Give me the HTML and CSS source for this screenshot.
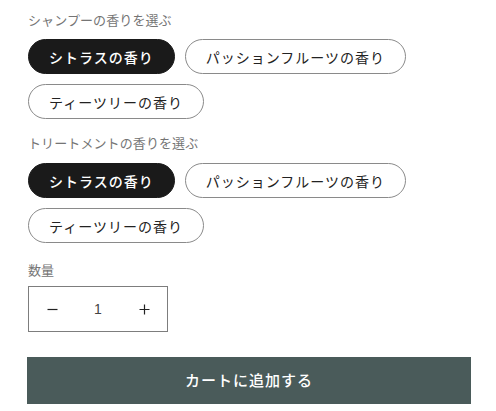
FILE: index.html
```html
<!DOCTYPE html>
<html lang="ja">
<head>
<meta charset="utf-8">
<link rel="stylesheet" href="styles.css">
</head>
<body>
<div class="product-form">
  <div class="option">
    <div class="option-label">シャンプーの香りを選ぶ</div>
    <div class="pills">
      <span class="pill pill-active">シトラスの香り</span>
      <span class="pill">パッションフルーツの香り</span>
      <span class="pill">ティーツリーの香り</span>
    </div>
  </div>
  <div class="option option-second">
    <div class="option-label">トリートメントの香りを選ぶ</div>
    <div class="pills">
      <span class="pill pill-active">シトラスの香り</span>
      <span class="pill">パッションフルーツの香り</span>
      <span class="pill">ティーツリーの香り</span>
    </div>
  </div>
  <div class="qty-label">数量</div>
  <div class="qty">
    <span class="qty-btn">
      <svg width="11" height="11" viewBox="0 0 11 11"><path d="M0.5 5.5H10.5" stroke="#222" stroke-width="1.2" fill="none"/></svg>
    </span>
    <span class="qty-value">1</span>
    <span class="qty-btn">
      <svg width="11" height="11" viewBox="0 0 11 11"><path d="M0.5 5.5H10.5M5.5 0.5V10.5" stroke="#222" stroke-width="1.2" fill="none"/></svg>
    </span>
  </div>
  <div class="cart-btn">カートに追加する</div>
</div>
</body>
</html>
```

FILE: styles.css
```css
html, body {
  margin: 0;
  padding: 0;
  background: #ffffff;
}
body {
  font-family: "Noto Sans CJK JP", "Noto Sans", sans-serif;
  color: #121212;
  width: 496px;
  height: 411px;
  overflow: hidden;
}
.product-form {
  padding: 10px 25px 0 28px;
}
.option-label {
  font-size: 13px;
  line-height: 20px;
  letter-spacing: 0.1px;
  color: #757575;
  margin-bottom: 9px;
}
.option-second {
  margin-top: 14px;
}
.option-second .option-label {
  margin-bottom: 10px;
}
.pills {
  display: flex;
  flex-wrap: wrap;
  gap: 10px;
}
.pill {
  box-sizing: border-box;
  height: 35px;
  display: inline-flex;
  align-items: center;
  padding: 0 20px 0 20px;
  border: 1px solid #8a8a8a;
  border-radius: 18px;
  font-size: 14px;
  letter-spacing: 1px;
  color: #222;
  background: #fff;
}
.pill-active {
  background: #1a1a1a;
  border-color: #1a1a1a;
  color: #ffffff;
  font-weight: 500;
}
.qty-label {
  margin-top: 17px;
  font-size: 13px;
  line-height: 20px;
  color: #757575;
  letter-spacing: 0.1px;
}
.qty {
  margin-top: 6px;
  box-sizing: border-box;
  width: 140px;
  height: 46px;
  border: 1px solid #7d7d7d;
  display: grid;
  grid-template-columns: 1fr 1fr 1fr;
  align-items: center;
}
.qty-btn {
  display: flex;
  justify-content: center;
  align-items: center;
}
.qty-value {
  text-align: center;
  font-family: "Liberation Sans", Arial, sans-serif;
  font-size: 14px;
  color: #444;
}
.cart-btn {
  margin-top: 25px;
  margin-left: -1px;
  width: 444px;
  height: 47px;
  background: #4a5b5a;
  color: #ffffff;
  display: flex;
  justify-content: center;
  align-items: center;
  padding-bottom: 2px;
  box-sizing: border-box;
  font-size: 15px;
  letter-spacing: 1px;
  font-weight: 500;
}
```
